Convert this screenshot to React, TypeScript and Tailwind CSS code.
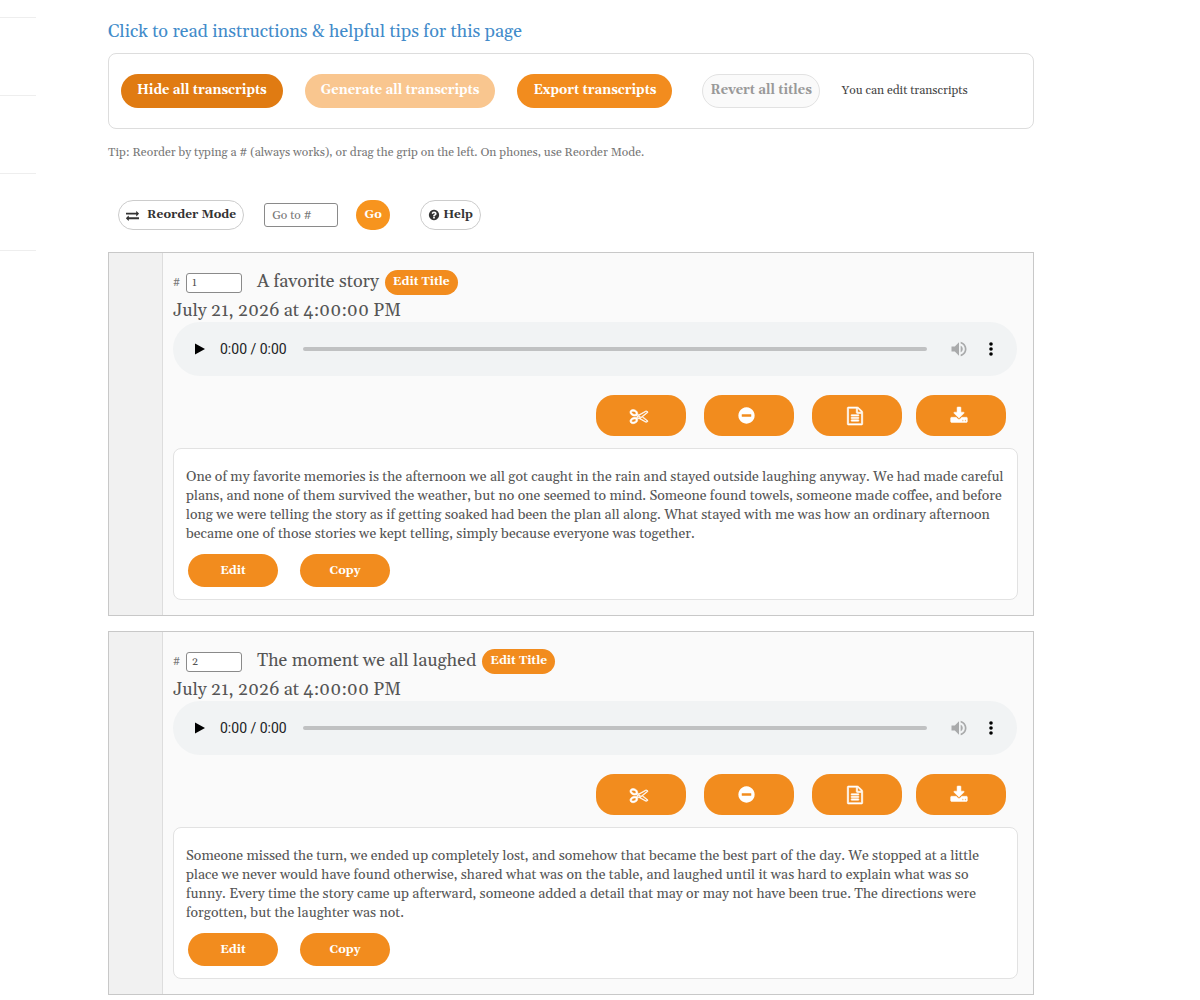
import { useState } from "react";
import type { ReactNode } from "react";

const ICONS = {
  exchange:
    "M1792 1184v192q0 13-9.5 22.5t-22.5 9.5h-1376v192q0 13-9.5 22.5t-22.5 9.5q-12 0-24-10l-319-320q-9-9-9-22 0-14 9-23l320-320q9-9 23-9 13 0 22.5 9.5t9.5 22.5v192h1376q13 0 22.5 9.5t9.5 22.5zm0-544q0 14-9 23l-320 320q-9 9-23 9-13 0-22.5-9.5t-9.5-22.5v-192h-1376q-13 0-22.5-9.5t-9.5-22.5v-192q0-13 9.5-22.5t22.5-9.5h1376v-192q0-14 9-23t23-9q12 0 24 10l319 319q9 9 9 23z",
  question:
    "M1024 1376v-192q0-14-9-23t-23-9h-192q-14 0-23 9t-9 23v192q0 14 9 23t23 9h192q14 0 23-9t9-23zm256-672q0-88-55.5-163t-138.5-116-170-41q-243 0-371 213-15 24 8 42l132 100q7 6 19 6 16 0 25-12 53-68 86-92 34-24 86-24 48 0 85.5 26t37.5 59q0 38-20 61t-68 45q-63 28-115.5 86.5t-52.5 125.5v36q0 14 9 23t23 9h192q14 0 23-9t9-23q0-19 21.5-49.5t54.5-49.5q32-18 49-28.5t46-35 44.5-48 28-60.5 12.5-81zm384 192q0 209-103 385.5t-279.5 279.5-385.5 103-385.5-103-279.5-279.5-103-385.5 103-385.5 279.5-279.5 385.5-103 385.5 103 279.5 279.5 103 385.5z",
  scissors:
    "M960 896q26 0 45 19t19 45-19 45-45 19-45-19-19-45 19-45 45-19zm300 64l507 398q28 20 25 56-5 35-35 51l-128 64q-13 7-29 7-17 0-31-8l-690-387-110 66q-8 4-12 5 14 49 10 97-7 77-56 147.5t-132 123.5q-132 84-277 84-136 0-222-78-90-84-79-207 7-76 56-147t131-124q132-84 278-84 83 0 151 31 9-13 22-22l122-73-122-73q-13-9-22-22-68 31-151 31-146 0-278-84-82-53-131-124t-56-147q-5-59 15.5-113t63.5-93q85-79 222-79 145 0 277 84 83 52 132 123t56 148q4 48-10 97 4 1 12 5l110 66 690-387q14-8 31-8 16 0 29 7l128 64q30 16 35 51 3 36-25 56zm-681-260q46-42 21-108t-106-117q-92-59-192-59-74 0-113 36-46 42-21 108t106 117q92 59 192 59 74 0 113-36zm-85 745q81-51 106-117t-21-108q-39-36-113-36-100 0-192 59-81 51-106 117t21 108q39 36 113 36 100 0 192-59zm178-613l96 58v-11q0-36 33-56l14-8-79-44-26 26q-3 3-10 11t-12 12q-2 2-4 3.5t-3 2.5zm224 224l96 32 736-576-128-64-768 431v113l-160 96 9 8q2 2 7 6 4 4 11 12t11 12l26 26zm704 416l128-64-520-408-177 138q-2 3-13 7z",
  minus:
    "M1344 960v-128q0-26-19-45t-45-19h-768q-26 0-45 19t-19 45v128q0 26 19 45t45 19h768q26 0 45-19t19-45zm320-64q0 209-103 385.5t-279.5 279.5-385.5 103-385.5-103-279.5-279.5-103-385.5 103-385.5 279.5-279.5 385.5-103 385.5 103 279.5 279.5 103 385.5z",
  file: "M1596 380q28 28 48 76t20 88v1152q0 40-28 68t-68 28h-1344q-40 0-68-28t-28-68v-1600q0-40 28-68t68-28h896q40 0 88 20t76 48zm-444-244v376h376q-10-29-22-41l-313-313q-12-12-41-22zm384 1528v-1024h-416q-40 0-68-28t-28-68v-416h-768v1536h1280zm-1024-864q0-14 9-23t23-9h704q14 0 23 9t9 23v64q0 14-9 23t-23 9h-704q-14 0-23-9t-9-23v-64zm736 224q14 0 23 9t9 23v64q0 14-9 23t-23 9h-704q-14 0-23-9t-9-23v-64q0-14 9-23t23-9h704zm0 256q14 0 23 9t9 23v64q0 14-9 23t-23 9h-704q-14 0-23-9t-9-23v-64q0-14 9-23t23-9h704z",
  download:
    "M1344 1344q0-26-19-45t-45-19-45 19-19 45 19 45 45 19 45-19 19-45zm256 0q0-26-19-45t-45-19-45 19-19 45 19 45 45 19 45-19 19-45zm128-224v320q0 40-28 68t-68 28h-1472q-40 0-68-28t-28-68v-320q0-40 28-68t68-28h465l135 136q58 56 136 56t136-56l136-136h464q40 0 68 28t28 68zm-325-569q17 41-14 70l-448 448q-18 19-45 19t-45-19l-448-448q-31-29-14-70 17-39 59-39h256v-448q0-26 19-45t45-19h256q26 0 45 19t19 45v448h256q42 0 59 39z",
};

function Icon({ name, className }: { name: keyof typeof ICONS; className: string }) {
  return (
    <svg viewBox="0 0 1792 1792" fill="currentColor" aria-hidden="true" className={className}>
      <path d={ICONS[name]} />
    </svg>
  );
}

const stories = [
  {
    id: 1,
    title: "A favorite story",
    date: "July 21, 2026 at 4:00:00 PM",
    text: "One of my favorite memories is the afternoon we all got caught in the rain and stayed outside laughing anyway. We had made careful plans, and none of them survived the weather, but no one seemed to mind. Someone found towels, someone made coffee, and before long we were telling the story as if getting soaked had been the plan all along. What stayed with me was how an ordinary afternoon became one of those stories we kept telling, simply because everyone was together.",
  },
  {
    id: 2,
    title: "The moment we all laughed",
    date: "July 21, 2026 at 4:00:00 PM",
    text: "Someone missed the turn, we ended up completely lost, and somehow that became the best part of the day. We stopped at a little place we never would have found otherwise, shared what was on the table, and laughed until it was hard to explain what was so funny. Every time the story came up afterward, someone added a detail that may or may not have been true. The directions were forgotten, but the laughter was not.",
  },
];

function ActionButton({ label, children }: { label: string; children: ReactNode }) {
  return (
    <button
      aria-label={label}
      className="flex h-[41px] w-[90px] items-center justify-center rounded-[18px] bg-[#f28c1e] pr-[5px] text-white"
    >
      {children}
    </button>
  );
}

function AudioPlayer() {
  return (
    <div className="mr-px flex h-[54px] items-center rounded-full bg-[#f1f3f4] pr-[22px] pl-[22px] font-['Roboto',sans-serif]">
      <button aria-label="Play" className="text-black">
        <svg viewBox="0 0 10 12" className="h-3 w-[10px]" fill="currentColor">
          <path d="M0 0.5v11l10-5.5z" />
        </svg>
      </button>
      <span className="ml-[15px] text-sm text-[#202124]">0:00 / 0:00</span>
      <input
        type="range"
        aria-label="Seek"
        defaultValue={0}
        className="ml-4 h-1 min-w-0 flex-1 appearance-none rounded-full bg-[#c0c1c2] [&::-webkit-slider-thumb]:size-0 [&::-webkit-slider-thumb]:appearance-none"
      />
      <button aria-label="Mute" disabled className="ml-[22px] text-[#a9aaab]">
        <svg viewBox="0 0 24 24" className="size-5" fill="currentColor">
          <path d="M3 9v6h4l5 5V4L7 9H3zm13.5 3c0-1.77-1.02-3.29-2.5-4.03v8.05c1.48-.73 2.5-2.25 2.5-4.02zM14 3.23v2.06c2.89.86 5 3.54 5 6.71s-2.11 5.85-5 6.71v2.06c4.01-.91 7-4.49 7-8.77s-2.99-7.86-7-8.77z" />
        </svg>
      </button>
      <button aria-label="More options" className="ml-[18px] text-black">
        <svg viewBox="0 0 8 14" className="h-[14px] w-2" fill="currentColor">
          <circle cx="4" cy="2" r="1.8" />
          <circle cx="4" cy="7" r="1.8" />
          <circle cx="4" cy="12" r="1.8" />
        </svg>
      </button>
    </div>
  );
}

function StoryCard({ story }: { story: (typeof stories)[number] }) {
  const [position, setPosition] = useState(String(story.id));

  return (
    <article className="flex border border-[#c8c8c8] bg-[#fafafa]">
      <div className="w-[54px] shrink-0 border-r border-[#dddddd] bg-[#f1f1f1]" />
      <div className="min-w-0 flex-1 pt-4 pr-[15px] pb-[15px] pl-[10px]">
        <div className="flex h-[26px] items-center">
          <div className="flex items-center pt-[2px]">
            <label htmlFor={`position-${story.id}`} className="w-[13px] text-[11px] text-[#777]">
              #
            </label>
            <input
              id={`position-${story.id}`}
              value={position}
              onChange={(e) => setPosition(e.target.value)}
              className="h-5 w-14 rounded-[3px] border border-[#8a8a8a] bg-white px-[5px] text-[11px] text-[#555]"
            />
          </div>
          <h2 className="ml-[15px] text-lg text-[#555]">{story.title}</h2>
          <button className="ml-[6px] h-[25px] rounded-full bg-[#f28c1e] px-2 text-xs font-bold text-white">
            Edit Title
          </button>
        </div>
        <p className="pt-1 text-lg leading-[23px] text-[#555]">{story.date}</p>
        <AudioPlayer />
        <div className="mt-[19px] flex justify-end gap-[14px] pr-3">
          <div className="flex gap-[18px]">
            <ActionButton label="Trim">
              <Icon name="scissors" className="size-[18px] overflow-visible stroke-white stroke-[60]" />
            </ActionButton>
            <ActionButton label="Remove">
              <Icon name="minus" className="size-[19px]" />
            </ActionButton>
            <ActionButton label="Transcript">
              <Icon name="file" className="size-[18px] overflow-visible stroke-white stroke-[60]" />
            </ActionButton>
          </div>
          <ActionButton label="Download">
            <Icon name="download" className="size-[18px] overflow-visible stroke-white stroke-[50]" />
          </ActionButton>
        </div>
        <div className="mt-3 rounded-lg border border-[#e2e2e2] bg-white px-3 pt-[19px] pb-3">
          <p className="text-sm leading-[19px] text-[#555]">{story.text}</p>
          <div className="mt-[10px] flex gap-[22px] pl-[2px] text-xs font-bold text-white">
            <button className="h-[33px] w-[90px] rounded-full bg-[#f28c1e]">Edit</button>
            <button className="h-[33px] w-[90px] rounded-full bg-[#f28c1e]">Copy</button>
          </div>
        </div>
      </div>
    </article>
  );
}

export default function App() {
  return (
    <div className="flex min-h-screen bg-white font-[Georgia,Gelasio,'Noto_Serif','DejaVu_Serif_Condensed','Liberation_Serif',serif]">
      <aside className="w-9 shrink-0 pt-[17px]">
        <div className="h-[78px] border-t border-[#eeeeee]" />
        <div className="h-[78px] border-t border-[#eeeeee]" />
        <div className="h-[78px] border-y border-[#eeeeee]" />
      </aside>
      <main className="min-w-0 flex-1 pt-[18px] pr-[166px] pb-[5px] pl-[72px]">
        <a href="#instructions" className="block text-lg leading-7 text-[#428bca]">
          Click to read instructions &amp; helpful tips for this page
        </a>

        <section className="mt-[7px] flex items-center rounded-lg border border-[#dddddd] px-3 py-5 text-[13px] font-bold">
          <button className="h-[34px] rounded-full bg-[#e07b12] px-4 text-white">Hide all transcripts</button>
          <button disabled className="ml-[22px] h-[34px] rounded-full bg-[#f9c68f] px-4 text-white">
            Generate all transcripts
          </button>
          <button className="ml-[22px] h-[34px] rounded-full bg-[#f28c1e] px-4 text-white">
            Export transcripts
          </button>
          <button
            disabled
            className="ml-[30px] h-[34px] rounded-full border border-[#e2e2e2] bg-[#fafafa] px-[7px] text-[#999]"
          >
            Revert all titles
          </button>
          <span className="ml-[22px] text-xs font-normal text-[#444]">You can edit transcripts</span>
        </section>

        <p className="mt-[15px] text-xs leading-[18px] text-[#777]">
          Tip: Reorder by typing a # (always works), or drag the grip on the left. On phones, use Reorder Mode.
        </p>

        <div className="mt-[38px] mb-[22px] flex items-center pl-[10px] text-xs font-bold text-[#333]">
          <button className="flex h-[30px] items-center rounded-full border border-[#cccccc] px-[7px]">
            <Icon name="exchange" className="mr-2 size-[13px]" />
            Reorder Mode
          </button>
          <input
            aria-label="Go to number"
            placeholder="Go to #"
            className="ml-5 h-6 w-[74px] rounded-[3px] border border-[#8a8a8a] px-[7px] text-xs font-normal placeholder:text-[#777]"
          />
          <button className="ml-[18px] h-[30px] w-[34px] rounded-full bg-[#f7941e] text-white">Go</button>
          <button className="ml-[30px] flex h-[30px] items-center gap-[3px] rounded-full border border-[#cccccc] px-[7px]">
            <Icon name="question" className="size-3" />
            Help
          </button>
        </div>

        <div className="space-y-[15px]">
          {stories.map((story) => (
            <StoryCard key={story.id} story={story} />
          ))}
        </div>
      </main>
    </div>
  );
}
